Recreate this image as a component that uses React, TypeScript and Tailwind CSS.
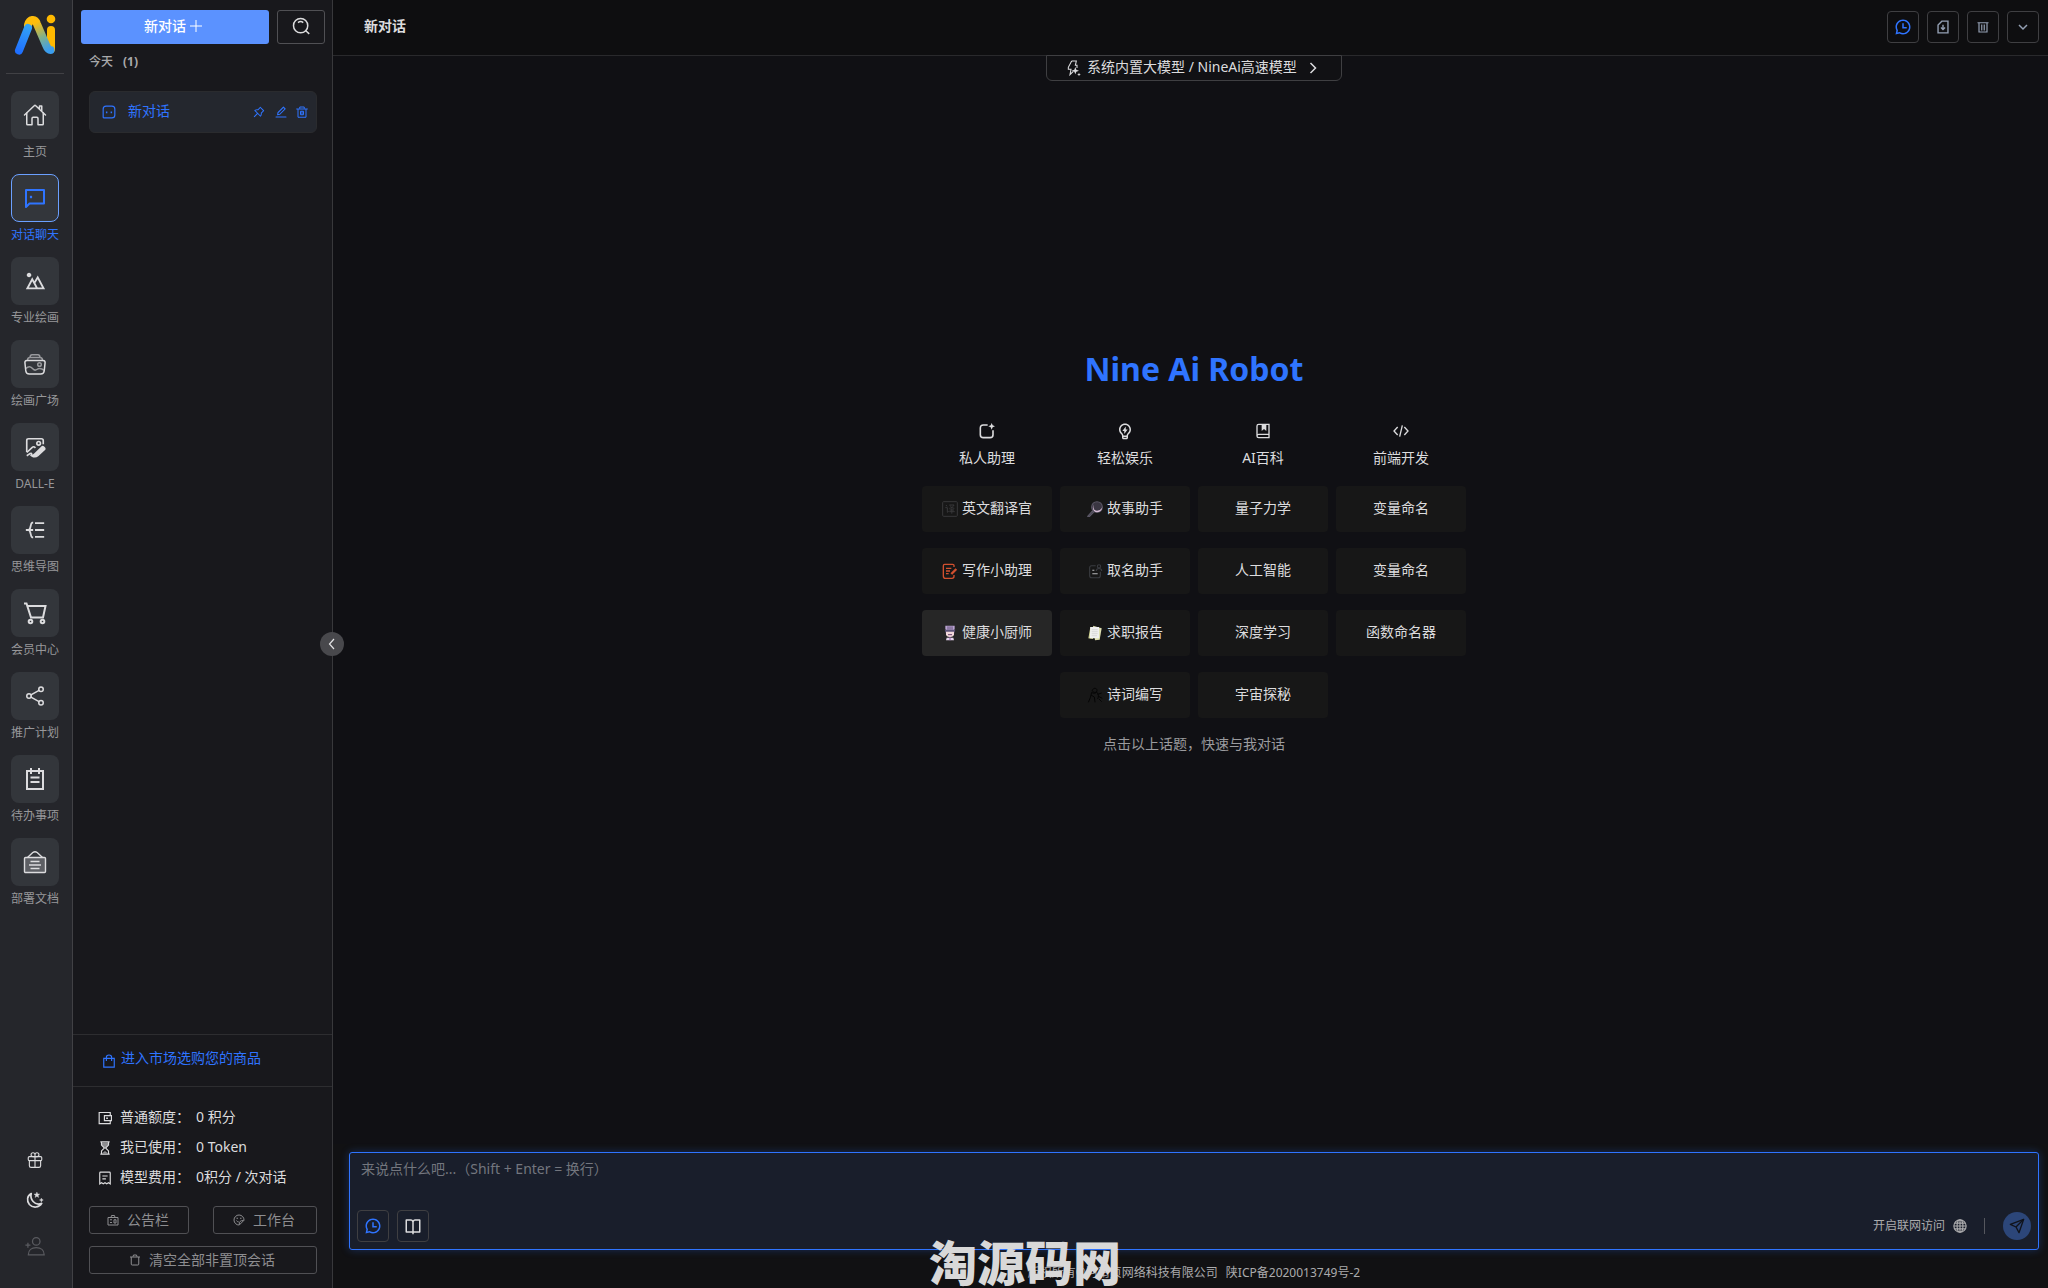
import React from "react";
import { RiChatHistoryLine, RiLandscapeLine, RiLightbulbFlashLine, RiBookOpenLine } from "react-icons/ri";
import { IoHomeOutline, IoShareSocialOutline, IoGiftOutline } from "react-icons/io5";
import { AiOutlinePushpin, AiOutlineEdit } from "react-icons/ai";

type IconProps = { className?: string };

function Svg({ className = "", sw = 2, children }: { className?: string; sw?: number; children: React.ReactNode }) {
  return (
    <svg viewBox="0 0 24 24" fill="none" stroke="currentColor" strokeWidth={sw} className={"shrink-0 " + className} aria-hidden="true">
      {children}
    </svg>
  );
}

const Logo = () => (
  <svg viewBox="0 0 42 42" className="size-[42px]" fill="none" strokeWidth="8" strokeLinecap="round" aria-hidden="true">
    <defs>
      <linearGradient id="blue" gradientUnits="userSpaceOnUse" x1="4" y1="38" x2="16" y2="10">
        <stop offset="0" stopColor="#1f6fff" />
        <stop offset="1" stopColor="#35a7f5" />
      </linearGradient>
      <linearGradient id="mix" gradientUnits="userSpaceOnUse" x1="17" y1="4" x2="36" y2="40">
        <stop offset="0.15" stopColor="#ffbd0a" />
        <stop offset="0.55" stopColor="#7fb08d" />
        <stop offset="0.9" stopColor="#3a9dee" />
      </linearGradient>
    </defs>
    <path d="M37 16v19" stroke="#ffb900" />
    <circle cx="37" cy="5" r="4.300" fill="#ffb900" />
    <path d="M14 11c1.500-6 7-7 9-1l9 21c1 2.500 2.500 5 4.500 5" stroke="url(#mix)" />
    <path d="m5 36.500 9-22.500" stroke="url(#blue)" />
  </svg>
);

const ChatIcon = ({ className }: IconProps) => (
  <Svg className={className}>
    <path d="M3 21V4h18v13.500H6.500z" strokeLinejoin="round" />
    <path d="M8 9.800v2.400" strokeWidth="2.200" />
  </Svg>
);
const GalleryIcon = ({ className }: IconProps) => (
  <Svg className={className} sw={1.5}>
    <path d="M4 8.500h16c2 0 2.300 1.500 2 3l-.8 7.500c-.3 2.500-1.500 3-3.500 3H6.300c-2 0-3.200-.5-3.500-3L2 11.500c-.3-1.500 0-3 2-3z" />
    <g opacity=".6">
      <path d="M4.500 8c.2-2 1-2.600 2.500-2.600h10c1.500 0 2.300.6 2.500 2.600M7 5c.2-1.600.7-2.300 2-2.300h6c1.300 0 1.800.7 2 2.300" />
      <circle cx="16.500" cy="12.500" r="1.800" />
      <path d="M2.800 16.500c3-2.800 5-2 7 .3 1.500 1.700 2.700 1.700 4 .7 2.500-1.700 5-1 7.500 1" />
    </g>
  </Svg>
);
const DalleIcon = ({ className }: IconProps) => (
  <Svg className={className} sw={1.8}>
    <path d="M3 17.500V5c0-1.400.6-2 2-2h14c1.400 0 2 .6 2 2v4" />
    <circle cx="16" cy="8" r="2" />
    <path d="m3 18 6-5.500c1.500-1.300 2-1 3.500.5" />
    <path d="M12 19.500 19.500 12c1-1 4 1.200 2.800 2.700L15 21.500c-2 1.500-5 1-6.500 0 1.700-.3 2.400-.7 3.500-2z" fill="currentColor" />
    <path d="M3 21.500c2-1 3-2.500 5-2.500 1 .5 0 1.500.5 2.500" />
  </Svg>
);
const MindIcon = ({ className }: IconProps) => (
  <Svg className={className}>
    <path d="M12 4.500h10M12 12h10M12 19.500h10M2 12h8M10 4H9c-2.500 1-1 7-4 8 3 1 1.500 7 4 8h1" />
  </Svg>
);
const CartIcon = ({ className }: IconProps) => (
  <Svg className={className}>
    <path d="M1 2.500h2.500L8 16.500h12l2.500-11.500H4.500" />
    <circle cx="7.500" cy="20.500" r="1.800" />
    <circle cx="19.500" cy="20.500" r="1.800" />
  </Svg>
);
const TodoIcon = ({ className }: IconProps) => (
  <Svg className={className}>
    <path d="M4 4h16v18H4zM8 1v6M16 1v6M7.500 10.500h9M7.500 15h9" />
  </Svg>
);
const DocIcon = ({ className }: IconProps) => (
  <Svg className={className} sw={1.4}>
    <path d="m4.500 7.500 5.300-5c1.400-1 3-1 4.400 0l5.300 5" />
    <rect x="1.500" y="7.500" width="21" height="15" rx="1" fill="currentColor" fillOpacity=".25" />
    <path d="M7.500 11.500h9M6 15h12M7.500 18.500h9" />
  </Svg>
);
const MoonIcon = ({ className }: IconProps) => (
  <Svg className={className} sw={2.2}>
    <path d="M7 3.500C1.500 6 .5 13 4.500 18c4.500 5 13 4.500 16.500-1.500-4 1.500-8.500 1-11.500-2.500C6.500 10.500 6 7 7 3.500z" strokeLinejoin="round" />
    <path d="m14.500 1.500 1 2.600 2.700.1-2.100 1.700.7 2.600-2.300-1.500-2.300 1.500.7-2.600-2.100-1.700 2.700-.1zM20.500 9.500l.8 1.700 1.700.8-1.700.8-.8 1.700-.8-1.700-1.700-.8 1.700-.8z" fill="currentColor" strokeWidth=".6" />
  </Svg>
);
const UserAddIcon = ({ className }: IconProps) => (
  <Svg className={className} sw={1.5}>
    <circle cx="13.500" cy="6.500" r="4.500" />
    <path d="M4 22.500c0-5.500 4-8.500 9.500-8.500s9.500 3 9.500 8.500zM.5 11h6M3.500 8v6" />
  </Svg>
);
const SearchIcon = ({ className }: IconProps) => (
  <Svg className={className}>
    <circle cx="11.500" cy="11.500" r="9.500" />
    <path d="M8 7.500c2-1.600 5-1.600 7 0M18 18l5 4.500" />
  </Svg>
);
const PlusIcon = ({ className }: IconProps) => (
  <Svg className={className}>
    <path d="M12 0v24M0 12h24" />
  </Svg>
);
const BotIcon = ({ className }: IconProps) => (
  <Svg className={className}>
    <path d="M2 21V7c0-3.500 1.500-5 5-5h10c3.500 0 5 1.500 5 5v10c0 3.500-1.500 5-5 5H3z" />
    <path d="M8 11v3M16 11v3" strokeWidth="2.500" />
  </Svg>
);
const BagIcon = ({ className }: IconProps) => (
  <Svg className={className}>
    <path d="M3 7.500h18v15H3zM7.500 12V5.500c0-5 9-5 9 0V12" />
  </Svg>
);
const WalletIcon = ({ className }: IconProps) => (
  <Svg className={className}>
    <path d="M21 8V2.500H2v19h19V17M11 8h12v8.500H11z" />
    <path d="M15.500 11v2.500" strokeWidth="3" />
  </Svg>
);
const HourglassIcon = ({ className }: IconProps) => (
  <Svg className={className}>
    <path d="M4 1.500h16M4 22.500h16M6 2v5l5 5-5 5v5M18 2v5l-5 5 5 5v5" />
    <path d="M6 3h12v4l-6 5-6-5zM12 17l5 4H7z" fill="currentColor" fillOpacity=".6" stroke="none" />
  </Svg>
);
const ReceiptIcon = ({ className }: IconProps) => (
  <Svg className={className}>
    <path d="M3 22V3.500C3 2.500 3.500 2 4.500 2h15c1 0 1.500.5 1.500 1.500V22l-3-2-3 2-3-2-3 2-3-2zM7.500 8.500h9M7.500 13.500h6" />
  </Svg>
);
const NoticeIcon = ({ className }: IconProps) => (
  <Svg className={className}>
    <path d="M2 7h20v15H2zM8 7l1-4h6l1 4M6 11.500h4M6 17h4M14 11.500h4V18h-4z" />
  </Svg>
);
const WorkIcon = ({ className }: IconProps) => (
  <Svg className={className}>
    <path d="M22 12.500A10 10 0 1 0 12.500 22L22 12.500zM12.500 21c0-6 2-8 8.500-8" />
    <path d="M7 8.500h3M14 8.500h3M7 13c1 2 2.500 3 4.500 3" />
  </Svg>
);
const DeleteIcon = ({ className }: IconProps) => (
  <Svg className={className}>
    <path d="M.5 6h23M4 6v16.500h16V6M7.500 5.500V2h9v3.500M9 10.500h6v7H9zM12 10.500v7" />
  </Svg>
);
const TrashIcon = ({ className }: IconProps) => (
  <Svg className={className}>
    <path d="M1 3.500h22M4 4v18h16V4M9.500 7v12M14.500 7v12" strokeWidth="2.400" />
  </Svg>
);
const BinIcon = ({ className }: IconProps) => (
  <Svg className={className}>
    <path d="M2 6h20M4.500 6v14c0 1.500.5 2 2 2h11c1.500 0 2-.5 2-2V6M8 5.500 9 2h6l1 3.500" />
  </Svg>
);
const ExportIcon = ({ className }: IconProps) => (
  <Svg className={className} sw={2.4}>
    <path d="M10 2h10.500v20h-17V8.500zM12 8v8M8.500 13l3.500 3.500 3.500-3.500" />
  </Svg>
);
const ChevronDown = ({ className }: IconProps) => (
  <Svg className={className} sw={3}>
    <path d="m4 8 8 8 8-8" />
  </Svg>
);
const ChevronRight = ({ className }: IconProps) => (
  <Svg className={className} sw={3}>
    <path d="m7 2 10 10L7 22" />
  </Svg>
);
const ChevronLeft = ({ className }: IconProps) => (
  <Svg className={className} sw={2.4}>
    <path d="M16 2 7 12l9 10" />
  </Svg>
);
const SparkBoltIcon = ({ className }: IconProps) => (
  <Svg className={className} sw={1.6}>
    <path d="M10 1.500h7L15.500 8H18v4M10 1.500 5 11v3h4l-1.500 8 5-5" />
    <path d="m15.500 10.500 1.500 4 4 1.500-4 1.500-1.500 4-1.500-4-4-1.500 4-1.500zM21 19l.8 2 2 .8-2 .8-.8 2-.8-2-2-.8 2-.8z" fill="currentColor" stroke="none" />
  </Svg>
);
const AssistantIcon = ({ className }: IconProps) => (
  <Svg className={className} sw={2.4}>
    <path d="M13 3H6.500C3.500 3 2 4.500 2 7.500v10C2 20.500 3.500 22 6.500 22h10c3 0 4.500-1.500 4.500-4.500V11" />
    <path d="m19 0 1.500 3.500L24 5l-3.500 1.500L19 10l-1.500-3.500L14 5l3.500-1.500z" fill="currentColor" stroke="none" />
  </Svg>
);
const WikiIcon = ({ className }: IconProps) => (
  <Svg className={className}>
    <path d="M21 17V2H5.500C4 2 3 3 3 4.500v15C3 21 4 22 5.500 22H21v-5H5.500C4 17 3 18 3 19.500" />
    <path d="M10 2h7v10l-3.500-3-3.500 3z" fill="currentColor" stroke="none" />
  </Svg>
);
const CodeIcon = ({ className }: IconProps) => (
  <Svg className={className}>
    <path d="m7 6-5.500 6L7 18M17 6l5.500 6-5.500 6M14 3.500l-4 17" />
  </Svg>
);
const GlobeIcon = ({ className }: IconProps) => (
  <Svg className={className}>
    <circle cx="12" cy="12" r="10.500" />
    <ellipse cx="12" cy="12" rx="5" ry="10.500" />
    <path d="M12 1.500v21M1.500 12h21M3.500 7h17M3.500 17h17" />
  </Svg>
);
const SendIcon = ({ className }: IconProps) => (
  <Svg className={className}>
    <path d="M22 2 2 9.500l8.500 4L15 22z" strokeLinejoin="round" />
    <path d="M22 2 10.500 13.500" />
  </Svg>
);
const TranslateIcon = ({ className }: IconProps) => (
  <Svg className={"text-[#38383a] " + className} sw={1.5}>
    <rect x="1" y="1" width="22" height="22" rx="1.500" />
    <path d="m6 6 1.500 2M5 10h3v7l2-1.500M11 6h7c-1 3-4 4.500-7 5M12 6.500c1 2.500 3 4 6.500 4.500M14.700 11v8M11.500 13.500h6.500M11 16h8" />
  </Svg>
);
const WriteIcon = ({ className }: IconProps) => (
  <Svg className={"text-[#d2502f] " + className}>
    <path d="M18 6V3.500C18 2.500 17 2 16 2H4C3 2 2 3 2 4v15c0 3 1 4 3 4h10c2 0 3-1 3-3v-2M6 8h8M6 12h6M6 16h4" />
    <path d="m21.500 9-7.500 7.500" strokeWidth="3.500" />
  </Svg>
);
const ChefIcon = ({ className }: IconProps) => (
  <Svg className={className} sw={0}>
    <path d="M5 1h14v5l-1 2H6L5 6z" fill="#b8a2cf" />
    <path d="M9 2v5M12 2v5M15 2v5" stroke="#4b3b63" strokeWidth="1.200" />
    <path d="M4 7h16l-2 6H6z" fill="#5d5378" />
    <path d="M6 10h12v4c0 2.500-2 4-6 4s-6-1.500-6-4z" fill="#f3d8dc" />
    <path d="M9 14.500h6" stroke="#6a4470" strokeWidth="1.500" />
    <path d="M7 19h10l1 4H6z" fill="#e7d6ee" />
    <path d="M12 18v5" stroke="#8d5fa6" strokeWidth="1.500" />
  </Svg>
);
const StoryIcon = ({ className }: IconProps) => (
  <Svg className={className} sw={1.6}>
    <circle cx="15" cy="9" r="8" fill="#3a3642" stroke="#5c5867" />
    <path d="M10 5c-2 7 2 11 8 9 3-1 5-4 5-6 0 6-4 9-8 9-5 0-8-6-5-12z" fill="#d9bfd9" stroke="none" />
    <path d="m8 15-7 8 2 1 7-7z" fill="#4a4652" stroke="#5c5867" />
  </Svg>
);
const NamingIcon = ({ className }: IconProps) => (
  <Svg className={"text-[#3a3c41] " + className} sw={1.6}>
    <path d="M13 4H7C5 4 4 5 4 7v12c0 2 1 3 3 3h10c2 0 3-1 3-3v-6" />
    <circle cx="18" cy="5" r="2.500" />
    <path d="M14 12c0-5 8-5 8 0" />
    <path d="M8 11h3M8 16h8" stroke="#b8b8ba" />
  </Svg>
);
const ReportIcon = ({ className }: IconProps) => (
  <Svg className={className} sw={0}>
    <path d="m2 20 3-17h4v18z" fill="#c9cc8a" />
    <path d="m9 1 13 4-3 17-7 1z" fill="#dfe0b0" />
    <path d="M5 3h13v17H4z" fill="#f0f0f0" />
    <path d="M7 7h9M7 10h9M7 13h9M7 16h8" stroke="#cfcfcf" strokeWidth="1" />
  </Svg>
);
const PoemIcon = ({ className }: IconProps) => (
  <Svg className={"text-[#050505] " + className} sw={1.5}>
    <path d="M8 5c1-4 7-4 7 0s-5 4-7 1zM7 8c2 2 6 2 8-1M7 8l-2 8-3 7M15 8c2 3 3 6 1 10M6 12l5 3 1 8M16 11l6-2M17 14l6 3M18 18l4 4" />
  </Svg>
);

const navItems = [
  { label: "主页", icon: <IoHomeOutline className="size-6" /> },
  { label: "对话聊天", icon: <ChatIcon className="size-6" />, active: true },
  { label: "专业绘画", icon: <RiLandscapeLine className="size-[22px]" /> },
  { label: "绘画广场", icon: <GalleryIcon className="size-6" /> },
  { label: "DALL-E", icon: <DalleIcon className="size-[22px]" /> },
  { label: "思维导图", icon: <MindIcon className="size-[22px]" /> },
  { label: "会员中心", icon: <CartIcon className="size-6" /> },
  { label: "推广计划", icon: <IoShareSocialOutline className="size-6" /> },
  { label: "待办事项", icon: <TodoIcon className="size-6" /> },
  { label: "部署文档", icon: <DocIcon className="size-6" /> },
];

const stats = [
  { label: "普通额度：", value: "0 积分", icon: <WalletIcon className="size-[14px]" /> },
  { label: "我已使用：", value: "0 Token", icon: <HourglassIcon className="size-[14px]" /> },
  { label: "模型费用：", value: "0积分 / 次对话", icon: <ReceiptIcon className="size-[14px]" /> },
];

type Topic = { text: string; icon?: React.ReactNode; hover?: boolean };
const columns: { title: string; icon: React.ReactNode; topics: Topic[] }[] = [
  {
    title: "私人助理",
    icon: <AssistantIcon className="size-4" />,
    topics: [
      { text: "英文翻译官", icon: <TranslateIcon className="size-4" /> },
      { text: "写作小助理", icon: <WriteIcon className="size-4" /> },
      { text: "健康小厨师", icon: <ChefIcon className="size-4" />, hover: true },
    ],
  },
  {
    title: "轻松娱乐",
    icon: <RiLightbulbFlashLine className="size-[18px]" />,
    topics: [
      { text: "故事助手", icon: <StoryIcon className="size-4" /> },
      { text: "取名助手", icon: <NamingIcon className="size-4" /> },
      { text: "求职报告", icon: <ReportIcon className="size-4" /> },
      { text: "诗词编写", icon: <PoemIcon className="size-4" /> },
    ],
  },
  {
    title: "AI百科",
    icon: <WikiIcon className="size-4" />,
    topics: [{ text: "量子力学" }, { text: "人工智能" }, { text: "深度学习" }, { text: "宇宙探秘" }],
  },
  {
    title: "前端开发",
    icon: <CodeIcon className="size-4" />,
    topics: [{ text: "变量命名" }, { text: "变量命名" }, { text: "函数命名器" }],
  },
];

const squareBtn = "flex size-8 items-center justify-center rounded border border-[#3f3f42]";
const outlineBtn = "flex h-7 items-center justify-center gap-2 rounded-[3px] border border-[#505054] pr-0.5 text-sm text-[#8d8d90]";

function Rail() {
  return (
    <nav aria-label="主导航" className="flex w-[73px] shrink-0 flex-col items-center border-r border-[#414145] bg-[#25262b] pt-[14px] pr-0.5 pb-[22px]">
      <Logo />
      <div className="mt-[17px] h-px w-[58px] bg-[#414145]" />
      <ul className="mt-[17px] flex flex-col gap-[17px]">
        {navItems.map((n) => (
          <li key={n.label}>
            <a href="#" className={"flex flex-col items-center text-xs leading-[18px] " + (n.active ? "text-[#2f74ff]" : "text-[#97979a]")}>
              <span
                className={
                  "mb-1 flex size-12 items-center justify-center rounded-lg bg-[#33363b] " +
                  (n.active ? "border border-[#6ba0ff] text-[#2f74ff]" : "text-[#dcdcde]")
                }
              >
                {n.icon}
              </span>
              <span className="-mb-1 whitespace-nowrap">{n.label}</span>
            </a>
          </li>
        ))}
      </ul>
      <div className="mt-auto flex flex-col items-center text-[#dcdcde]">
        <button aria-label="签到" className="flex h-10 items-center">
          <IoGiftOutline className="size-[18px]" />
        </button>
        <button aria-label="切换主题" className="flex h-10 items-center">
          <MoonIcon className="size-[18px]" />
        </button>
        <button aria-label="用户中心" className="mt-1.5 flex h-10 items-center text-[#5a5b60]">
          <UserAddIcon className="size-5" />
        </button>
      </div>
    </nav>
  );
}

function Sidebar() {
  return (
    <aside className="relative flex w-[260px] shrink-0 flex-col border-r border-[#38383b] bg-[#18181c]">
      <div className="flex gap-2 pt-[10px] pr-[7px] pl-2">
        <button className="flex h-[34px] flex-1 items-center justify-center gap-1 rounded-[3px] bg-[#5b92ff] pr-1 pb-0.5 text-sm font-medium text-white">
          新对话
          <PlusIcon className="size-3" />
        </button>
        <button aria-label="搜索" className="flex h-[34px] w-12 items-center justify-center rounded-[3px] border border-[#505054] pb-0.5 text-[#dcdcde]">
          <SearchIcon className="size-[18px]" />
        </button>
      </div>
      <h2 className="mt-2 pl-4 text-xs leading-5 font-medium text-[#a9a9ab]">
        今天<span className="ml-2.5 font-bold">(1)</span>
      </h2>
      <div className="mt-[19px] mr-[15px] ml-4 flex h-[42px] items-center rounded-md border border-[#2a2b2e] bg-[#24272e] pr-2 pl-3 text-[#2f74ff]">
        <BotIcon className="size-[14px]" />
        <a href="#" className="ml-3 flex-1 pb-0.5 text-sm">新对话</a>
        <div className="flex gap-2">
          <button aria-label="置顶"><AiOutlinePushpin className="size-[14px]" /></button>
          <button aria-label="编辑"><AiOutlineEdit className="size-[14px]" /></button>
          <button aria-label="删除"><DeleteIcon className="size-3" /></button>
        </div>
      </div>

      <a href="#" className="mt-auto flex h-[52px] items-center gap-[5px] border-t border-[#2d2d30] pl-[29px] text-sm text-[#2f74ff]">
        <BagIcon className="size-[14px]" />
        <span className="pb-1.5">进入市场选购您的商品</span>
      </a>
      <div className="border-t border-[#2d2d30] pt-4 pr-[15px] pb-[14px] pl-4">
        <ul className="text-sm text-[#dcdcde]">
          {stats.map((s) => (
            <li key={s.label} className="flex h-[30px] items-center pl-[9px]">
              {s.icon}
              <span className="ml-2 w-[76px] pb-0.5">{s.label}</span>
              <span className="pb-0.5">{s.value}</span>
            </li>
          ))}
        </ul>
        <div className="mt-[13px] flex gap-6">
          <button className={outlineBtn + " w-[100px]"}>
            <NoticeIcon className="size-3" />
            公告栏
          </button>
          <button className={outlineBtn + " flex-1"}>
            <WorkIcon className="size-3" />
            工作台
          </button>
        </div>
        <button className={outlineBtn + " mt-3 w-full"}>
          <BinIcon className="size-3" />
          清空全部非置顶会话
        </button>
      </div>
      <button aria-label="收起侧栏" className="absolute top-1/2 -right-3 z-10 flex size-6 -translate-y-1/2 items-center justify-center rounded-full bg-[#48484c] text-[#e4e4e6]">
        <ChevronLeft className="size-3" />
      </button>
    </aside>
  );
}

function Composer() {
  return (
    <footer className="relative bg-[#111113] pt-2 pr-[9px] pl-4">
      <form className="flex h-[98px] flex-col rounded-[3px] border border-[#2f74ff] bg-[#191e2b] px-[7px] pb-[7px] shadow-[0_0_8px_rgba(47,116,255,0.3)]">
        <textarea
          aria-label="消息"
          placeholder="来说点什么吧...（Shift + Enter = 换行）"
          className="w-full flex-1 resize-none bg-transparent px-1 pt-[5px] text-sm leading-[22px] text-white outline-none placeholder:text-[#73767e]"
        />
        <div className="flex items-center">
          <button type="button" aria-label="上下文" className={squareBtn + " text-[#2f74ff]"}>
            <RiChatHistoryLine className="size-[18px]" />
          </button>
          <button type="button" aria-label="提示词" className={squareBtn + " ml-2 text-[#dcdcde]"}>
            <RiBookOpenLine className="size-[18px]" />
          </button>
          <button type="button" className="ml-auto flex items-center gap-2 text-xs text-[#ababad]">
            开启联网访问
            <GlobeIcon className="size-[14px]" />
          </button>
          <span className="ml-[17px] h-4 w-px bg-[#55575e]" />
          <button type="button" aria-label="发送" className="ml-[18px] flex size-7 items-center justify-center rounded-full bg-[#2c4679] text-[#10131b]">
            <SendIcon className="size-4" />
          </button>
        </div>
      </form>
      <p className="flex h-[38px] items-center justify-center gap-2 pt-2 text-xs text-[#ababad]">
        <span>版权所有©河南页网络科技有限公司</span>
        <a href="#">陕ICP备2020013749号-2</a>
      </p>
      <strong className="absolute bottom-0 left-[596px] text-[48px] leading-[50px] font-black whitespace-nowrap text-[#d8d8d8]">淘源码网</strong>
    </footer>
  );
}

export default function App() {
  return (
    <div className="flex h-screen bg-[#101014] font-['Noto_Sans','Noto_Sans_CJK_SC',sans-serif]">
      <Rail />
      <Sidebar />
      <main className="flex min-w-0 flex-1 flex-col">
        <header className="flex h-14 shrink-0 items-center justify-between border-b border-[#29292c] bg-[#0e0e10] pr-[9px] pl-[31px]">
          <h1 className="pb-1 text-sm font-bold text-[#dcdcde]">新对话</h1>
          <div className="flex gap-2 pb-px text-[#94a0b4]">
            <button aria-label="历史" className={squareBtn + " text-[#2f74ff]"}>
              <RiChatHistoryLine className="size-[18px]" />
            </button>
            <button aria-label="导出" className={squareBtn}>
              <ExportIcon className="size-[14px]" />
            </button>
            <button aria-label="清空" className={squareBtn}>
              <TrashIcon className="size-3" />
            </button>
            <button aria-label="更多" className={squareBtn}>
              <ChevronDown className="size-3" />
            </button>
          </div>
        </header>
        <section className="flex flex-1 flex-col items-center pr-[9px] pl-4">
          <button className="-mt-px flex h-[26px] w-[296px] items-center rounded-b-md border border-[#3f3f42] bg-[#111114] pr-[22px] pl-[18px] text-sm text-[#dcdcde]">
            <SparkBoltIcon className="mr-1.5 size-4" />
            <span className="pb-0.5">系统内置大模型 / NineAi高速模型</span>
            <ChevronRight className="ml-auto size-3" />
          </button>
          <h2 className="mt-[264px] text-[32px] leading-[48px] font-bold text-[#2f74ff]">Nine Ai Robot</h2>
          <div className="mt-[29px] grid grid-cols-4 gap-2">
            {columns.map((c) => (
              <div key={c.title} className="flex w-[130px] flex-col items-center">
                <span className="flex h-[18px] items-center text-[#dcdcde]">{c.icon}</span>
                <h3 className="mt-2 text-sm leading-5 text-[#dcdcde]">{c.title}</h3>
                <div className="mt-[18px] flex w-full flex-col gap-4">
                  {c.topics.map((t, i) => (
                    <button
                      key={i}
                      className={
                        "flex h-[46px] items-center justify-center gap-1 rounded text-sm text-[#dcdcde] " +
                        (t.hover ? "bg-[#262626]" : "bg-[#171717]")
                      }
                    >
                      {t.icon}
                      <span className="pb-0.5">{t.text}</span>
                    </button>
                  ))}
                </div>
              </div>
            ))}
          </div>
          <p className="mt-4 text-sm text-[#9b9b9e]">点击以上话题，快速与我对话</p>
        </section>
        <Composer />
      </main>
    </div>
  );
}
